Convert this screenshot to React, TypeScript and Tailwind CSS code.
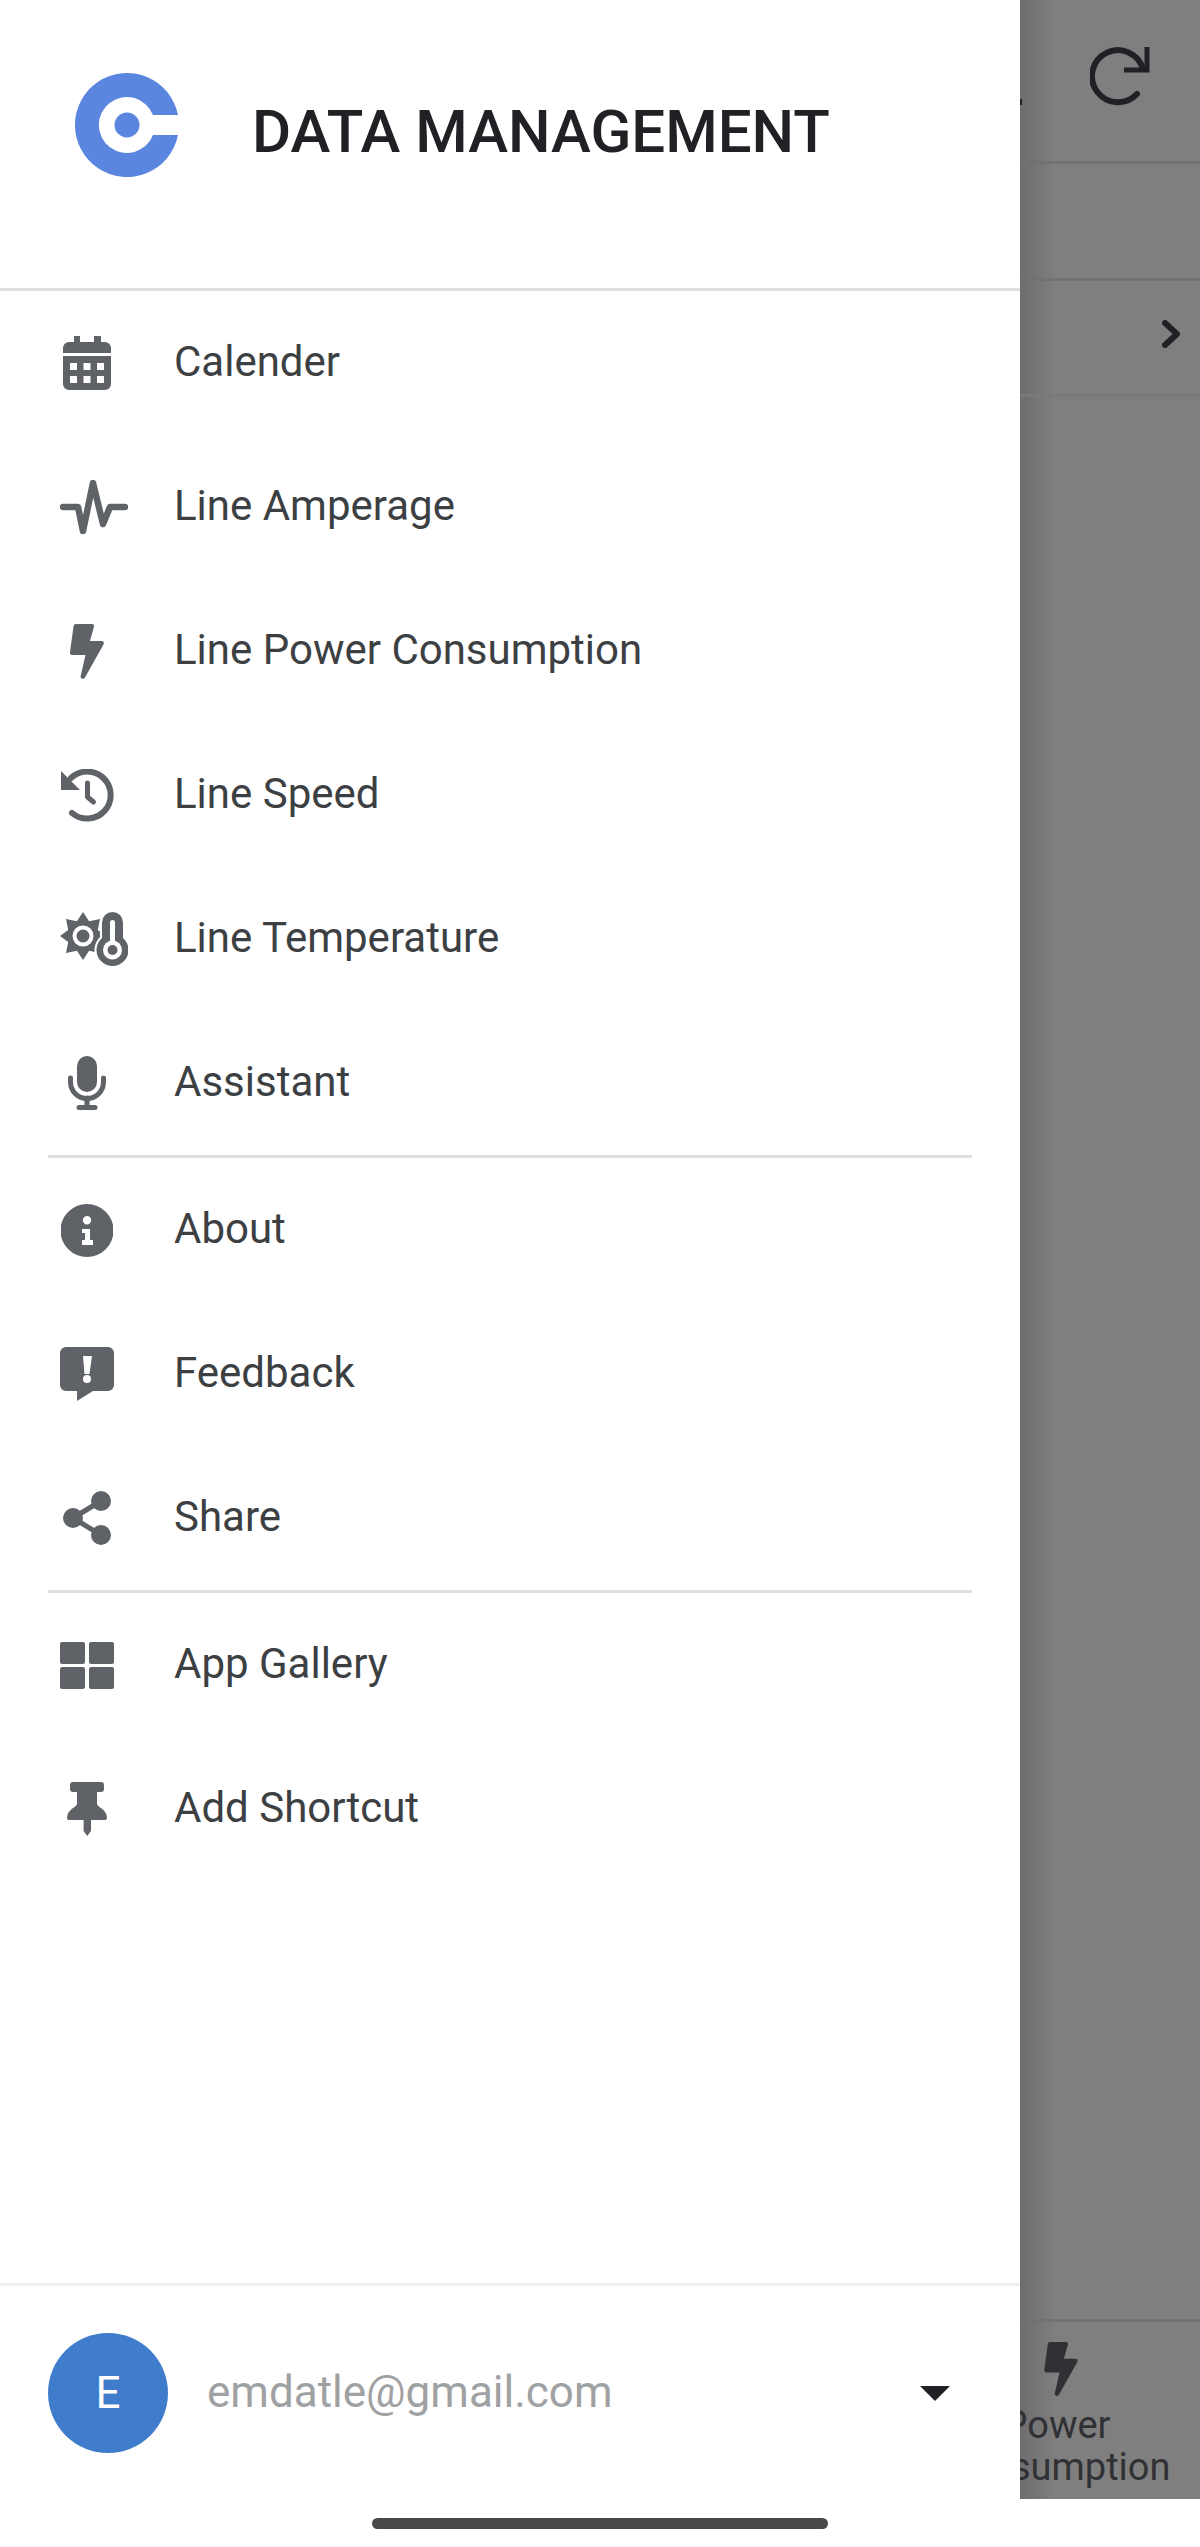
import type { ReactNode } from "react";

const boltPath =
  "M6 0h16c1.500 0 2.400 1 2 2.500L20 17h11.500c2 0 3 1.500 2 3.500L15 53.500c-1.500 2.500-5 1-4.300-1.500L15.500 31H2.500C.8 31-.2 30 0 28L3.500 2.500C3.800.8 4.500 0 6 0z";

const thermoPath = "M52.500 0A10.500 10.500 0 0 1 63 10.500V26a16 16 0 1 1-21 0V10.500A10.500 10.500 0 0 1 52.500 0z";

const items: { label: string; w: number; h: number; icon: ReactNode }[] = [
  {
    label: "Calender",
    w: 48,
    h: 54,
    icon: (
      <>
        <path d="M11 0h6v6h14V0h7v6h4a6 6 0 0 1 6 6v5H0v-5a6 6 0 0 1 6-6h5z" />
        <path
          fillRule="evenodd"
          d="M0 20h48v28a6 6 0 0 1-6 6H6a6 6 0 0 1-6-6zM7 27v7h7v-7zm13.500 0v7h7v-7zm13.500 0v7h7v-7zM7 40v7h7v-7zm13.500 0v7h7v-7zm13.500 0v7h7v-7z"
        />
      </>
    ),
  },
  {
    label: "Line Amperage",
    w: 68,
    h: 54,
    icon: (
      <path
        d="M3 27h15l5 24L33 3l10 41 7-17h15"
        fill="none"
        stroke="currentColor"
        strokeWidth="6.500"
        strokeLinecap="round"
        strokeLinejoin="round"
      />
    ),
  },
  { label: "Line Power Consumption", w: 34, h: 55, icon: <path d={boltPath} /> },
  {
    label: "Line Speed",
    w: 53,
    h: 53,
    icon: (
      <>
        <path d="M0 2l19 19H0z" />
        <path d="M10 9A23.500 23.500 0 1 1 11 44" fill="none" stroke="currentColor" strokeWidth="6" strokeLinecap="round" />
        <path d="M26.500 14v14l6 5" fill="none" stroke="currentColor" strokeWidth="5" strokeLinecap="round" strokeLinejoin="round" />
      </>
    ),
  },
  {
    label: "Line Temperature",
    w: 68,
    h: 54,
    icon: (
      <>
        <polygon points="23,0 29.100,9.200 40,7 37.800,17.900 46,24 37.800,30.100 40,41 29.100,38.800 23,48 16.900,38.800 6,41 8.200,30.100 0,24 8.200,17.900 6,7 16.900,9.200" />
        <circle cx="23" cy="24" r="10.500" fill="#fff" />
        <circle cx="23" cy="24" r="6.500" />
        <path d={thermoPath} stroke="#fff" strokeWidth="4" />
        <path d={thermoPath} />
        <rect x="50" y="8" width="5" height="24" rx="2.500" fill="#fff" />
        <circle cx="52.500" cy="38" r="9.500" fill="#fff" />
        <circle cx="52.500" cy="38" r="5" />
      </>
    ),
  },
  {
    label: "Assistant",
    w: 38,
    h: 54,
    icon: (
      <>
        <rect x="9" y="0" width="20" height="36" rx="10" />
        <path d="M2.500 22v4a16.500 16.500 0 0 0 33 0v-4" fill="none" stroke="currentColor" strokeWidth="5" strokeLinecap="round" />
        <path d="M19 42v9M11 51.500h16" fill="none" stroke="currentColor" strokeWidth="5" strokeLinecap="round" />
      </>
    ),
  },
];

const items2: typeof items = [
  {
    label: "About",
    w: 52,
    h: 53,
    icon: (
      <path
        fillRule="evenodd"
        d="M26 0a26 26 0 1 1 0 53A26 26 0 0 1 26 0zm0 12a4.200 4.200 0 1 0 0 8.400 4.200 4.200 0 0 0 0-8.400zm-5 13v4h3v7h-3v5h11v-5h-3V25z"
      />
    ),
  },
  {
    label: "Feedback",
    w: 54,
    h: 55,
    icon: (
      <path
        fillRule="evenodd"
        d="M6 0h42a6 6 0 0 1 6 6v32a6 6 0 0 1-6 6H33L17 54V44H6a6 6 0 0 1-6-6V6a6 6 0 0 1 6-6zm17 9l1.500 18h5L32 9zm4 19a4 4 0 1 0 0 8 4 4 0 0 0 0-8z"
      />
    ),
  },
  {
    label: "Share",
    w: 48,
    h: 54,
    icon: (
      <>
        <circle cx="10" cy="27" r="10" />
        <circle cx="38" cy="10" r="10" />
        <circle cx="38" cy="44" r="10" />
        <path d="M10 27L38 10M10 27l28 17" fill="none" stroke="currentColor" strokeWidth="5" />
      </>
    ),
  },
];

const items3: typeof items = [
  {
    label: "App Gallery",
    w: 54,
    h: 47,
    icon: (
      <>
        <rect x="0" y="0" width="25" height="22" rx="2" />
        <rect x="29" y="0" width="25" height="22" rx="2" />
        <rect x="0" y="25" width="25" height="22" rx="2" />
        <rect x="29" y="25" width="25" height="22" rx="2" />
      </>
    ),
  },
  {
    label: "Add Shortcut",
    w: 40,
    h: 54,
    icon: (
      <path d="M6 0h28a3 3 0 0 1 3 3v4a3 3 0 0 1-3 3h-4v12c0 3 10 5 10 14a2 2 0 0 1-2 2H24v11l-3.700 5-3.700-5V38H2a2 2 0 0 1-2-2c0-9 10-11 10-14V10H6a3 3 0 0 1-3-3V3a3 3 0 0 1 3-3z" />
    ),
  },
];

function Row({ label, w, h, icon }: (typeof items)[number]) {
  return (
    <div className="flex h-[144px] items-center">
      <div className={`ml-[60px] flex w-[54px] shrink-0 items-center text-[#5f6368] ${w > 54 ? "justify-start" : "justify-center"}`}>
        <svg className="shrink-0" width={w} height={h} viewBox={`0 0 ${w} ${h}`} fill="currentColor">
          {icon}
        </svg>
      </div>
      <span className="ml-[60px] -mt-[3px] text-[42px] leading-none text-[#3c4043]">{label}</span>
    </div>
  );
}

export default function App() {
  return (
    <div className="relative flex h-[2547px] w-[1200px] overflow-hidden bg-white font-['Roboto',sans-serif]">
      <aside className="flex w-[1020px] shrink-0 flex-col bg-white">
        <header className="flex h-[291px] items-start border-b-[3px] border-[#dfe0e3]">
          <svg className="ml-[75px] mt-[73px] shrink-0" width="104" height="104" viewBox="0 0 104 104">
            <path fill="#5a86e0" d="M103 42A52 52 0 1 0 103 62H78A28 28 0 1 1 78 42z" />
            <circle cx="52" cy="52" r="12.500" fill="#5a86e0" />
          </svg>
          <h1 className="ml-[73px] mt-[102px] text-[60px] font-medium leading-none text-[#202124]">DATA MANAGEMENT</h1>
        </header>
        {items.map((item) => (
          <Row key={item.label} {...item} />
        ))}
        <div className="mx-[48px] h-[3px] bg-[#dfdfdf]" />
        {items2.map((item) => (
          <Row key={item.label} {...item} />
        ))}
        <div className="mx-[48px] h-[3px] bg-[#dfdfdf]" />
        {items3.map((item) => (
          <Row key={item.label} {...item} />
        ))}
        <footer className="mt-auto flex h-[264px] items-start border-t-[3px] border-[#eeeff1] pl-[48px] pt-[47px]">
          <div className="flex h-[120px] w-[120px] shrink-0 items-center justify-center rounded-full bg-[#3f7ccb] text-[44px] leading-none text-white">E</div>
          <span className="ml-[39px] mt-[37px] text-[44px] leading-none text-[#a0a1a3]">emdatle@gmail.com</span>
          <div className="ml-auto mr-[70px] mt-[53px] h-0 w-0 border-x-[15px] border-t-[15px] border-x-transparent border-t-[#202124]" />
        </footer>
      </aside>

      <div className="relative flex h-[2499px] flex-1 flex-col overflow-hidden bg-gradient-to-r from-[#6d6d6d] to-[#7f7f7f] to-[20%]">
        <div className="absolute left-0 top-[99px] h-[6px] w-[2px] bg-[#202124]" />
        <div className="flex h-[164px] shrink-0 justify-end border-b-[3px] border-[#707273] pr-[50px] pt-[47px]">
          <svg width="60" height="60" viewBox="0 0 60 60" fill="none" stroke="#202124" strokeWidth="6">
            <path d="M47 47A26 26 0 1 1 53 22" strokeLinecap="round" />
            <path d="M57 0v23H34" strokeWidth="5" />
          </svg>
        </div>
        <div className="h-[117px] shrink-0 border-b-[3px] border-[#707273]" />
        <div className="flex h-[116px] shrink-0 items-center justify-end border-b-[3px] border-[#787979] pb-[8px] pr-[20px]">
          <svg width="18" height="28" viewBox="0 0 18 28" fill="none" stroke="#202124" strokeWidth="6" strokeLinecap="round" strokeLinejoin="round">
            <path d="M3 3l12 11L3 25" />
          </svg>
        </div>
        <div className="mt-auto h-[180px] shrink-0 border-t-[3px] border-[#707273] pt-[20px]">
          <svg className="ml-[24px]" width="34" height="54" viewBox="0 0 34 55" fill="#303134">
            <path d={boltPath} />
          </svg>
          <div className="-ml-[103px] mt-[8px] w-[280px] text-center text-[38px] leading-[42px] text-[#303134]">
            Power
            <br />
            Consumption
          </div>
        </div>
      </div>

      <div className="absolute left-[372px] top-[2518px] h-[11px] w-[456px] rounded-full bg-[#484848]" />
    </div>
  );
}
